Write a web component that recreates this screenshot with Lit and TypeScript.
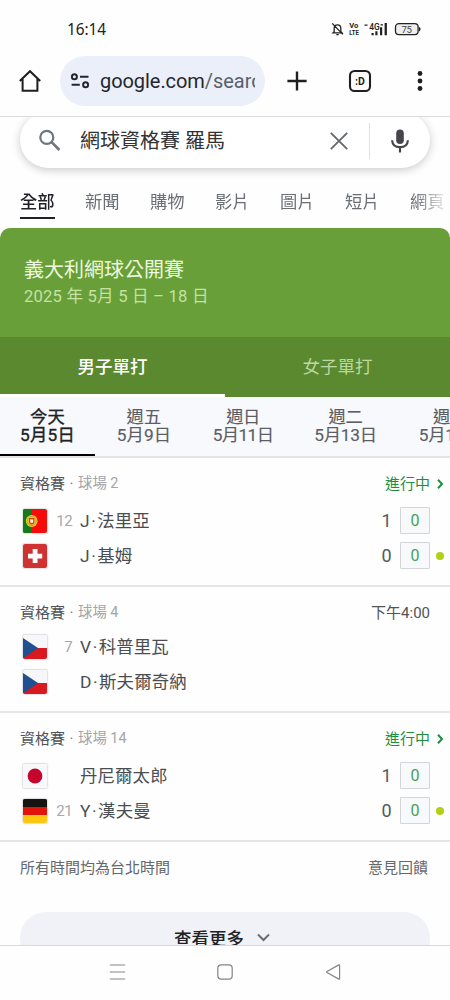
import { LitElement, html, css, svg, nothing } from "lit";
import { customElement, property } from "lit/decorators.js";

type Player = { flag: string; seed?: string; name: string; sets?: string; game?: string; serving?: boolean };
type Match = { court: string; status: string; live: boolean; players: Player[] };

const FLAGS: Record<string, unknown> = {
  pt: svg`<rect width="24" height="24" fill="#f60b08"/><rect width="9" height="24" fill="#157a1c"/>
    <circle cx="8.7" cy="12" r="5.9" fill="#e9cb25"/><circle cx="8.7" cy="12" r="4.5" fill="none" stroke="#b79a1c" stroke-width=".7"/>
    <path d="M6 9h5.400v3.600a2.700 2.900 0 0 1-5.400 0z" fill="#e0382c"/><path d="M7.200 10.200h3v2.300a1.500 1.600 0 0 1-3 0z" fill="#f5f0e4"/>`,
  ch: svg`<rect width="24" height="24" fill="#cf3230"/><path d="M9.700 5h4.800v4.700h4.700v4.700h-4.700v4.700H9.700v-4.700H5V9.700h4.700z" fill="#fff"/>`,
  cz: svg`<rect width="24" height="24" fill="#f7f7f9"/><path d="M0 13h24v11H0z" fill="#d8191f"/><path d="M0 3 15 13 0 23.500z" fill="#20508f"/>`,
  jp: svg`<rect width="24" height="24" fill="#f9f9fb"/><circle cx="12" cy="12" r="7.400" fill="#c6052f"/>`,
  de: svg`<rect width="24" height="24" fill="#fdc60f"/><path d="M0 0h24v16H0z" fill="#e01409"/><path d="M0 0h24v8H0z" fill="#161313"/>`,
};

const MATCHES: Match[] = [
  { court: "球場 2", status: "進行中", live: true, players: [
    { flag: "pt", seed: "12", name: "J·法里亞", sets: "1", game: "0" },
    { flag: "ch", name: "J·基姆", sets: "0", game: "0", serving: true } ] },
  { court: "球場 4", status: "下午4:00", live: false, players: [
    { flag: "cz", seed: "7", name: "V·科普里瓦" },
    { flag: "cz", name: "D·斯夫爾奇納" } ] },
  { court: "球場 14", status: "進行中", live: true, players: [
    { flag: "jp", name: "丹尼爾太郎", sets: "1", game: "0" },
    { flag: "de", seed: "21", name: "Y·漢夫曼", sets: "0", game: "0", serving: true } ] },
];

@customElement("match-card")
class MatchCard extends LitElement {
  @property({ attribute: false }) match!: Match;

  static styles = css`
    :host { display: block; box-sizing: border-box; padding-top: 16px; border-bottom: 2px solid #e4e5e7; }
    .head { display: flex; align-items: center; height: 20px; line-height: 20px; padding: 0 20px; font-size: 15px; color: #505357; }
    .sep { width: 13px; text-align: center; color: #777; }
    .court { flex: 1; color: #a3a5a8; font-size: 14.4px; }
    .live { color: #1e8e3e; }
    .chev { display: block; flex: none; width: 8px; height: 12px; margin: -1px -14px 0 6px; }
    .rows { padding-top: 9px; }
    .upcoming { padding-top: 6px; }
    .row { display: flex; align-items: center; height: 35px; padding: 0 6px 0 22px; }
    .flag { display: block; width: 24px; height: 24px; border: 1px solid #e3e3e5; border-radius: 3px; overflow: hidden; box-shadow: 0 0 1px #ccc; }
    .seed { width: 24px; text-align: right; font-size: 15px; letter-spacing: -.6px; color: #a6a8ab; }
    .name { flex: 1; padding-left: 8px; font-size: 17.4px; letter-spacing: .15px; line-height: 24px; color: #4a4d51; white-space: nowrap; }
    .dot { padding: 0 1.4px; }
    .sets { width: 27px; text-align: center; font-size: 18px; color: #55585c; }
    .game { box-sizing: border-box; width: 30px; height: 27px; border: 1px solid #d3d5d8; border-radius: 1px; background: #f7f9fa; color: #45a05e; font-size: 16px; line-height: 26px; text-align: center; }
    .serve { width: 14px; display: flex; justify-content: flex-end; }
    .ball { width: 8px; height: 8px; border-radius: 50%; background: #b3cf16; }
  `;

  render() {
    const m = this.match;
    return html`
      <div class="head">
        <span>資格賽</span><span class="sep">·</span><span class="court">${m.court}</span>
        <span class="${m.live ? "live" : ""}">${m.status}</span>
        ${m.live ? html`<svg class="chev" viewBox="0 0 8 12"><path d="M2 1.800 6 6 2 10.200" fill="none" stroke="#1e8e3e" stroke-width="2"/></svg>` : nothing}
      </div>
      <div class="rows ${m.live ? "" : "upcoming"}">
        ${m.players.map((p) => {
          const dot = p.name.indexOf("·");
          return html`<div class="row">
            <svg class="flag" viewBox="0 0 24 24">${FLAGS[p.flag]}</svg>
            <span class="seed">${p.seed ?? ""}</span>
            <span class="name">${dot < 0 ? p.name : html`${p.name.slice(0, dot)}<span class="dot">·</span>${p.name.slice(dot + 1)}`}</span>
            ${p.game !== undefined ? html`<span class="sets">${p.sets}</span><span class="game">${p.game}</span>
            <span class="serve">${p.serving ? html`<span class="ball"></span>` : nothing}</span>` : nothing}
          </div>`;
        })}
      </div>`;
  }
}

@customElement("app-root")
class AppRoot extends LitElement {
  static styles = css`
    :host { display: flex; flex-direction: column; width: 450px; height: 1000px; overflow: hidden; background: #fefefe; font-family: Roboto, "Noto Sans CJK TC", sans-serif; color: #202124; }
    svg { display: block; flex: none; }
    .status { display: flex; align-items: center; justify-content: space-between; height: 56px; box-sizing: border-box; padding: 2px 27px 0 67px; }
    .clock { font-family: "Noto Sans", sans-serif; font-size: 15.4px; color: #222; letter-spacing: -.1px; }
    .toolbar { display: flex; align-items: center; box-sizing: border-box; height: 61px; padding: 0 0 11px 18px; border-bottom: 1px solid #dcdcdd; }
    .home { margin-right: 18px; }
    .url { display: flex; align-items: center; box-sizing: border-box; width: 205px; height: 50px; border-radius: 25px; background: #ebeff9; padding: 0 10px; }
    .address { width: 156px; margin-left: 10px; overflow: hidden; white-space: nowrap; font-size: 20px; color: #24262b; letter-spacing: -.06px; }
    .path { color: #5b5f67; }
    .plus { margin-left: 22px; }
    .tabcount { margin-left: 41px; }
    .more { margin-left: 45px; }
    .page { flex: 1; min-height: 0; overflow: hidden; }
    .search { display: flex; align-items: center; box-sizing: border-box; height: 56px; margin: -5px 20px 0; padding: 2px 18px 0; border-radius: 28px; background: #fff; box-shadow: 0 2px 9px rgba(32, 33, 36, .24); }
    .query { flex: 1; padding-left: 18px; font-size: 20px; line-height: 28px; color: #333; white-space: nowrap; }
    .rule { width: 1px; height: 36px; background: #dedfe1; margin: 0 20px; }
    .tabs { display: flex; height: 60px; box-sizing: border-box; padding: 21px 0 0 20px; overflow: hidden; white-space: nowrap; -webkit-mask-image: linear-gradient(90deg, #000 415px, transparent 450px); }
    .tab { flex: none; width: 65px; font-size: 17.3px; line-height: 26px; color: #6b6e73; }
    .on { color: #202124; font-weight: 500; }
    .on span { display: inline-block; height: 28px; border-bottom: 2px solid #202124; }
    .hero { height: 109px; box-sizing: border-box; padding: 29px 24px 0; border-radius: 10px 10px 0 0; background: #689f38; }
    .title { font-size: 20px; line-height: 26px; color: #edf8df; }
    .range { font-size: 16.6px; line-height: 27px; color: #c5e2a4; letter-spacing: .2px; }
    .genders { display: flex; height: 60px; background: #5a8930; font-size: 17.5px; line-height: 60px; text-align: center; }
    .gender { flex: 1; box-sizing: border-box; color: #bdd8a1; }
    .chosen { color: #fff; font-weight: 500; border-bottom: 3px solid #fff; }
    .dates { display: flex; height: 61px; box-sizing: border-box; border-bottom: 2px solid #e2e4e8; background: #f8f9fd; overflow: hidden; }
    .date { flex: none; box-sizing: border-box; padding-top: 12px; height: 60px; text-align: center; font-size: 17.3px; line-height: 17.6px; color: #5b5e63; white-space: nowrap; -webkit-text-stroke: .15px currentColor; }
    .today { color: #202124; border-bottom: 3px solid #000; -webkit-text-stroke: .35px currentColor; letter-spacing: .2px; }
    .w0 { width: 95px; } .w1 { width: 98px; letter-spacing: .15px; } .w2 { width: 100px; letter-spacing: -.6px; } .w3 { width: 105px; letter-spacing: -.2px; } .w4 { width: 104px; letter-spacing: -.2px; }
    .m1 { height: 129px; } .m2 { height: 126px; } .m3 { height: 129px; }
    .notes { display: flex; justify-content: space-between; height: 70px; box-sizing: border-box; padding: 15px 22px 0 20px; font-size: 15px; line-height: 22px; color: #65686d; }
    .show { display: flex; align-items: center; justify-content: center; height: 53px; margin: 0 20px; padding: 0 6px 2px 0; box-sizing: border-box; border-radius: 26px; background: #f0f2f7; font-size: 17.5px; font-weight: 500; color: #202124; gap: 13px; }
    .nav { display: flex; align-items: center; box-sizing: border-box; height: 55px; padding: 0 0 2px 109px; border-top: 1px solid #d9d9da; }
    .square { margin-left: 91px; } .back { margin-left: 92px; }
  `;

  render() {
    const dates = [["今天", "5月5日"], ["週五", "5月9日"], ["週日", "5月11日"], ["週二", "5月13日"], ["週四", "5月15日"]];
    return html`
      <div class="status">
        <span class="clock">16:14</span>
        <svg width="92" height="16" viewBox="0 0 92 16" font-family="Roboto" fill="#222">
          <path d="M3.200 10.600V7.200a3.300 3.300 0 0 1 6.600 0v3.400l1.200 1.200H2zM1.200 2.400l10.600 11M5.300 13.600h2.400" fill="none" stroke="#222" stroke-width="1.300"/>
          <text x="18.300" y="7.400" font-size="8" font-weight="700" textLength="9" lengthAdjust="spacingAndGlyphs">Vo</text>
          <text x="18.300" y="14.200" font-size="8" font-weight="700" textLength="9.500" lengthAdjust="spacingAndGlyphs">LTE</text>
          <path d="M33.500 3.500h3v1.200h-3zM49.600 3.300h2.400v1.200h-2.400z"/>
          <text x="38.300" y="8.500" font-size="9" font-weight="500" textLength="10.500" lengthAdjust="spacingAndGlyphs">4G</text>
          <path d="M40.500 12h2.200v2.300h-2.200zM44.300 10.200h2.200v4.100h-2.200zM49 6.300h2.200v8H49zM53.600 2h2.300v12.300h-2.300z"/>
          <rect x="64.500" y="2.700" width="22.600" height="11" rx="3.400" fill="#eee" stroke="#222" stroke-width="1.300"/>
          <path d="M88 6c2 .4 2 4 0 4.400z"/>
          <text x="70.500" y="11.800" font-size="9.600" fill="#444" textLength="10.500">75</text>
        </svg>
      </div>
      <div class="toolbar">
        <svg class="home" width="24" height="24" viewBox="0 0 24 24" fill="none" stroke="#1f1f1f" stroke-width="2"><path d="M1.800 12 12 2.200 22.200 12M4.600 9.600v12.200h14.800V9.600"/></svg>
        <div class="url">
          <svg width="20" height="18" viewBox="0 0 20 18" fill="none" stroke="#24262b" stroke-width="2"><circle cx="4.400" cy="4.800" r="2.500"/><path d="M10 4.800h8.500M1.600 12.800h8.200"/><circle cx="15.600" cy="12.800" r="2.500"/></svg>
          <div class="address">google.com<span class="path">/search</span></div>
        </div>
        <svg class="plus" width="20" height="20" viewBox="0 0 20 20"><path d="M10 .4v19.200M.4 10h19.200" stroke="#1f1f1f" stroke-width="2.400"/></svg>
        <svg class="tabcount" width="24" height="24" viewBox="0 0 24 24"><rect x="2" y="2" width="20" height="20" rx="4.600" fill="none" stroke="#1f1f1f" stroke-width="2.100"/><text x="7" y="15.800" font-family="Roboto" font-size="10.500" font-weight="700" fill="#1f1f1f">:D</text></svg>
        <svg class="more" width="6" height="20" viewBox="0 0 6 20" fill="#1f1f1f"><circle cx="3" cy="2.500" r="2.400"/><circle cx="3" cy="10" r="2.400"/><circle cx="3" cy="17.500" r="2.400"/></svg>
      </div>
      <div class="page">
        <div class="search">
          <svg width="24" height="24" viewBox="0 0 24 24" fill="none" stroke="#70757a"><circle cx="8.800" cy="8.400" r="6.500" stroke-width="2.200"/><path d="M13.600 13.200 21.400 21" stroke-width="2.600"/></svg>
          <span class="query">網球資格賽 羅馬</span>
          <svg width="20" height="20" viewBox="0 0 20 20"><path d="m1.800 1.800 16.400 16.400M18.200 1.800 1.800 18.200" stroke="#66696d" stroke-width="1.900"/></svg>
          <span class="rule"></span>
          <svg width="22" height="26" viewBox="0 0 22 26"><rect x="6.200" y="1.400" width="7.600" height="14.600" rx="3.800" fill="#444649"/><path d="M2.100 12.200c.3 4.500 3.500 7 7.900 7s7.600-2.500 7.900-7M10 19v5.500" fill="none" stroke="#444649" stroke-width="2.200"/></svg>
        </div>
        <div class="tabs">
          ${["全部", "新聞", "購物", "影片", "圖片", "短片", "網頁"].map((t, i) => html`<div class="tab ${i ? "" : "on"}"><span>${t}</span></div>`)}
        </div>
        <div class="hero"><div class="title">義大利網球公開賽</div><div class="range">2025 年 5月 5 日 – 18 日</div></div>
        <div class="genders"><div class="gender chosen">男子單打</div><div class="gender">女子單打</div></div>
        <div class="dates">
          ${dates.map(([d, n], i) => html`<div class="date w${i} ${i ? "" : "today"}"><div>${d}</div><div>${n}</div></div>`)}
        </div>
        ${MATCHES.map((m, i) => html`<match-card class="m${i + 1}" .match=${m}></match-card>`)}
        <div class="notes"><span>所有時間均為台北時間</span><span>意見回饋</span></div>
        <div class="show"><span>查看更多</span><svg width="13" height="9" viewBox="0 0 13 9"><path d="m1 1.500 5.500 5.500L12 1.500" fill="none" stroke="#6a6d72" stroke-width="2"/></svg></div>
      </div>
      <div class="nav">
        <svg width="17" height="16" viewBox="0 0 17 16"><path d="M.8 1h15.400M.8 8h15.400M.8 15h15.400" stroke="#858585" stroke-width="1.200"/></svg>
        <svg class="square" width="16" height="16" viewBox="0 0 16 16"><rect x=".8" y=".8" width="14.400" height="14.400" rx="3.400" fill="none" stroke="#858585" stroke-width="1.200"/></svg>
        <svg class="back" width="17" height="16" viewBox="0 0 17 16"><path d="M14.600 1.300v13.400q0 .8-.8.400L2 8.600q-1-.6 0-1.200L13.800.9q.8-.4.8.4z" fill="none" stroke="#858585" stroke-width="1.200"/></svg>
      </div>`;
  }
}
